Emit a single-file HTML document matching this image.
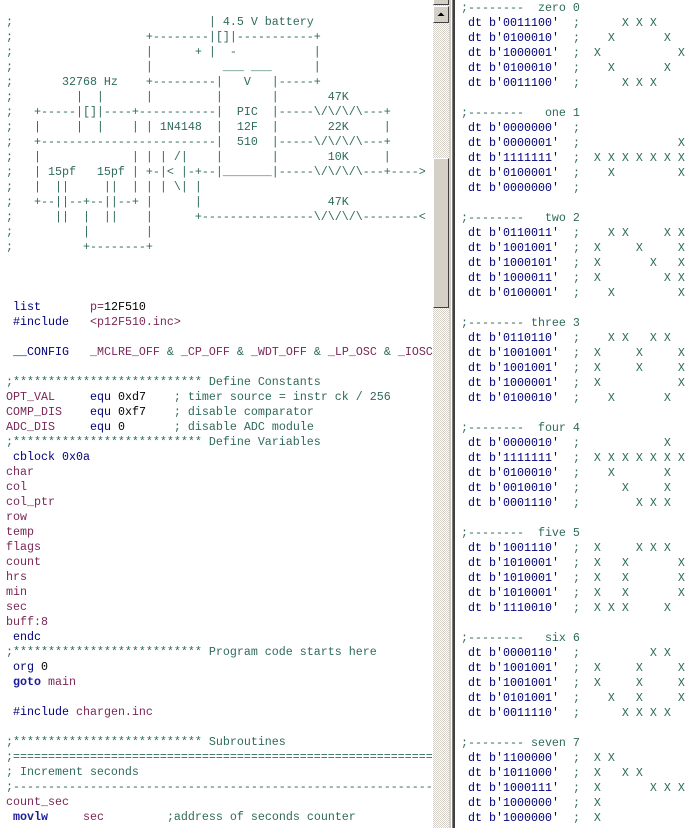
<!DOCTYPE html>
<html><head><meta charset="utf-8">
<style>
html,body{margin:0;padding:0;width:694px;height:828px;overflow:hidden;background:#fff;}
.pane{position:absolute;top:0;height:828px;overflow:hidden;background:#fff;}
pre{margin:0;font-family:"Liberation Mono",monospace;font-size:11.67px;line-height:15px;white-space:pre;color:#000;}
.c{color:#2f6a5c;}
.k{color:#00007a;}
.b{color:#1a1a9a;font-weight:bold;}
.p{color:#7a2858;}
.n{color:#000;}
#left{left:0;width:433px;}
#left pre{position:absolute;left:6px;top:0px;}
#right{left:455px;width:239px;}
#right pre{position:absolute;left:6px;top:1px;}
#sb{position:absolute;left:433px;top:0;width:16px;height:828px;
background-color:#fff;background-image:linear-gradient(45deg,#d4d0c8 25%,transparent 25%,transparent 75%,#d4d0c8 75%),linear-gradient(45deg,#d4d0c8 25%,transparent 25%,transparent 75%,#d4d0c8 75%);background-size:2px 2px;background-position:0 0,1px 1px;}
.btn{position:absolute;left:0;width:16px;background:#d4d0c8;box-sizing:border-box;border-top:1px solid #fff;border-left:1px solid #fff;border-right:1px solid #404040;border-bottom:1px solid #404040;}
#div{position:absolute;left:449px;top:0;width:6px;height:828px;background:#d4d0c8;}
#div i{position:absolute;top:0;height:828px;}
</style></head><body>
<div id="left" class="pane"><pre>

<span class="c">;                            | 4.5 V battery</span>
<span class="c">;                   +--------|[]|-----------+</span>
<span class="c">;                   |      + |  -           |</span>
<span class="c">;                   |          ___ ___      |</span>
<span class="c">;       32768 Hz    +---------|   V   |-----+</span>
<span class="c">;         |  |      |         |       |       47K</span>
<span class="c">;   +-----|[]|----+-----------|  PIC  |-----\/\/\/\---+</span>
<span class="c">;   |     |  |    | | 1N4148  |  12F  |       22K     |</span>
<span class="c">;   +-------------------------|  510  |-----\/\/\/\---+</span>
<span class="c">;   |             | | | /|    |       |       10K     |</span>
<span class="c">;   | 15pf   15pf | +-|&lt; |-+--|_______|-----\/\/\/\---+----&gt;</span>
<span class="c">;   |  ||     ||  | | | \| |</span>
<span class="c">;   +--||--+--||--+ |      |                  47K</span>
<span class="c">;      ||  |  ||    |      +----------------\/\/\/\--------&lt;</span>
<span class="c">;          |        |</span>
<span class="c">;          +--------+</span>



 <span class="k">list</span>       <span class="p">p=</span><span class="n">12F510</span>
 <span class="k">#include</span>   <span class="p">&lt;p12F510.inc&gt;</span>

 <span class="k">__CONFIG</span>   <span class="p">_MCLRE_OFF</span> <span class="c">&amp;</span> <span class="p">_CP_OFF</span> <span class="c">&amp;</span> <span class="p">_WDT_OFF</span> <span class="c">&amp;</span> <span class="p">_LP_OSC</span> <span class="c">&amp;</span> <span class="p">_IOSCFS_OFF</span>

<span class="c">;*************************** Define Constants</span>
<span class="p">OPT_VAL</span>     <span class="k">equ</span> <span class="n">0xd7</span>    <span class="c">; timer source = instr ck / 256</span>
<span class="p">COMP_DIS</span>    <span class="k">equ</span> <span class="n">0xf7</span>    <span class="c">; disable comparator</span>
<span class="p">ADC_DIS</span>     <span class="k">equ</span> <span class="n">0</span>       <span class="c">; disable ADC module</span>
<span class="c">;*************************** Define Variables</span>
 <span class="k">cblock 0x0a</span>
<span class="p">char</span>
<span class="p">col</span>
<span class="p">col_ptr</span>
<span class="p">row</span>
<span class="p">temp</span>
<span class="p">flags</span>
<span class="p">count</span>
<span class="p">hrs</span>
<span class="p">min</span>
<span class="p">sec</span>
<span class="p">buff:8</span>
 <span class="k">endc</span>
<span class="c">;*************************** Program code starts here</span>
 <span class="k">org</span> <span class="n">0</span>
 <span class="b">goto</span> <span class="p">main</span>

 <span class="k">#include</span> <span class="p">chargen.inc</span>

<span class="c">;*************************** Subroutines</span>
<span class="c">;==========================================================================</span>
<span class="c">; Increment seconds</span>
<span class="c">;--------------------------------------------------------------------------</span>
<span class="p">count_sec</span>
 <span class="b">movlw</span>     <span class="p">sec</span>         <span class="c">;address of seconds counter</span>
</pre></div>

<div id="sb">
  <div class="btn" style="top:-12px;height:17px;"></div>
  <div class="btn" style="top:6px;height:17px;">
    <svg width="14" height="15" style="position:absolute;left:0;top:0"><polygon points="3.5,9 10.5,9 7,5.5" fill="#000"/></svg>
  </div>
  <div class="btn" style="top:158px;height:150px;"></div>
</div>
<div id="div"><i style="left:0;width:1px;background:#d4d0c8"></i><i style="left:2px;width:1px;background:#fff"></i><i style="left:3px;width:1px;background:#808080"></i><i style="left:4px;width:2px;background:#404040"></i></div>

<div id="right" class="pane"><pre id="rp"></pre></div>
<script>
var g=[["zero 0",11,["0011100","0100010","1000001","0100010","0011100"]],
["one 1",12,["0000000","0000001","1111111","0100001","0000000"]],
["two 2",12,["0110011","1001001","1000101","1000011","0100001"]],
["three 3",10,["0110110","1001001","1001001","1000001","0100010"]],
["four 4",11,["0000010","1111111","0100010","0010010","0001110"]],
["five 5",11,["1001110","1010001","1010001","1010001","1110010"]],
["six 6",12,["0000110","1001001","1001001","0101001","0011110"]],
["seven 7",10,["1100000","1011000","1000111","1000000","1000000"]]];
var h="";
function pad(n){return " ".repeat(n);}
g.forEach(function(x){
  h+='<span class="c">;--------'+pad(x[1]-9)+x[0]+'</span>\n';
  x[2].forEach(function(b){
    var s="";for(var i=0;i<7;i++){s+=(b[i]=="1"?"X":" ")+(i<6?" ":"");}
    h+=' <span class="k">dt b\''+b+'\'</span>  <span class="c">;  '+s.replace(/\s+$/,"")+'</span>\n';
  });
  h+='\n';
});
document.getElementById("rp").innerHTML=h;
</script>
</body></html>
